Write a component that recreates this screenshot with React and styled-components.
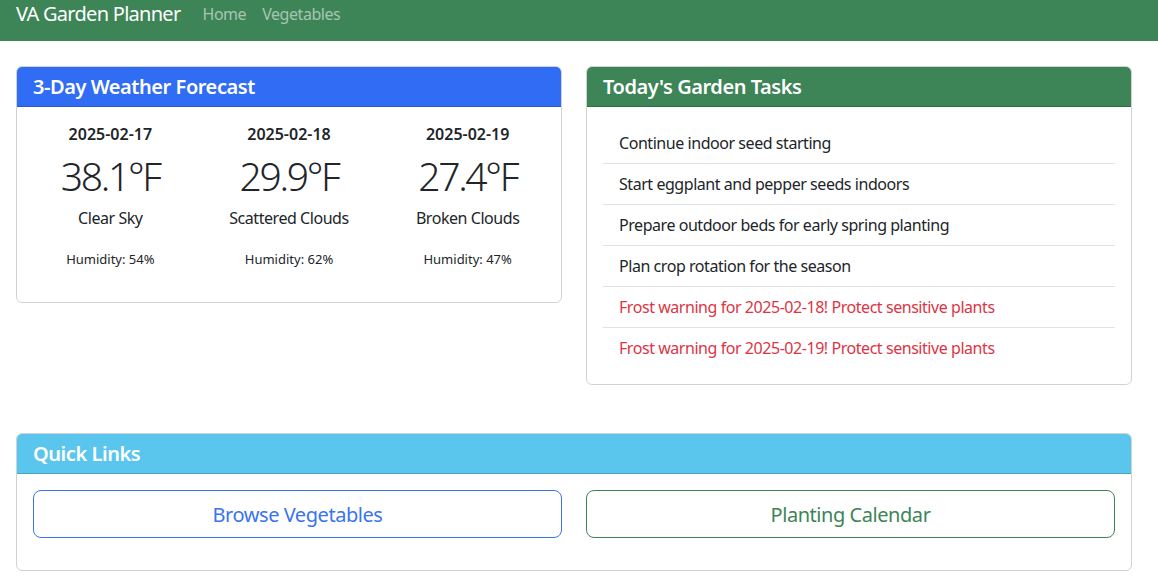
import styled, { createGlobalStyle } from "styled-components";

const GlobalStyle = createGlobalStyle`
  * { box-sizing: border-box; }
  body {
    margin: 0;
    font-family: "Noto Sans", "Open Sans", sans-serif;
    letter-spacing: -0.028em;
    color: #212529;
    background: #fff;
  }
`;

const Navbar = styled.nav`
  height: 41px;
  background: #3d8457;
  display: flex;
  align-items: flex-start;
  padding: 0 16px;
`;
const Brand = styled.a`
  color: #fff;
  font-size: 20px;
  line-height: 28px;
  letter-spacing: -0.036em;
  margin-right: 22px;
  text-decoration: none;
`;
const NavLinks = styled.div`
  display: flex;
  gap: 16px;
`;
const NavLink = styled.a`
  color: rgba(255, 255, 255, 0.55);
  font-size: 16px;
  line-height: 28px;
  text-decoration: none;
`;

const Page = styled.main`
  width: 1142px;
  padding: 25px 10px 0 16px;
`;
const Row = styled.div`
  display: grid;
  grid-template-columns: 1fr 1fr;
  gap: 24px;
  align-items: start;
  margin-bottom: ${(p) => p.$mb || 0}px;
`;
const Card = styled.section`
  border: 1px solid rgba(0, 0, 0, 0.175);
  border-radius: 6px;
  overflow: hidden;
`;
const CardHeader = styled.header`
  background: ${(p) => p.$bg};
  color: #fff;
  height: 40px;
  padding: 0 16px;
  display: flex;
  align-items: center;
  font-size: 20px;
  font-weight: 600;
  border-bottom: 1px solid rgba(0, 0, 0, 0.175);
`;
const CardBody = styled.div`
  padding: 16px;
`;

const WeatherRow = styled.div`
  display: grid;
  grid-template-columns: repeat(3, 1fr);
  margin: 0 -12px;
  padding-bottom: 17px;
`;
const Day = styled.div`
  text-align: center;
  padding: 0 12px;
`;
const DayDate = styled.div`
  font-weight: 600;
  font-size: 16px;
  line-height: 22px;
  letter-spacing: 0;
`;
const Temp = styled.div`
  font-size: 39px;
  font-weight: 300;
  line-height: 48px;
  letter-spacing: -2.3px;
  margin-top: 7px;
`;
const Desc = styled.div`
  font-size: 16px;
  line-height: 24px;
  margin-top: 6px;
`;
const Humidity = styled.div`
  font-size: 13px;
  line-height: 20px;
  letter-spacing: 0;
  margin-top: 19px;
`;

const TaskList = styled.ul`
  list-style: none;
  margin: 0;
  padding: 0;
`;
const Task = styled.li`
  padding: 0 16px;
  height: 41px;
  display: flex;
  align-items: center;
  font-size: 16px;
  color: ${(p) => (p.$warn ? "#dc3545" : "#212529")};
  border-bottom: 1px solid #dee2e6;
  &:last-child { border-bottom: none; height: 40px; }
`;

const LinksRow = styled.div`
  display: grid;
  grid-template-columns: 1fr 1fr;
  gap: 24px;
  padding-bottom: 16px;
`;
const LinkButton = styled.a`
  height: 48px;
  display: flex;
  align-items: center;
  justify-content: center;
  border: 1px solid ${(p) => p.$color};
  color: ${(p) => p.$color};
  border-radius: 8px;
  font-size: 20px;
  text-decoration: none;
`;

const days = [
  { date: "2025-02-17", temp: "38.1°F", desc: "Clear Sky", hum: 54 },
  { date: "2025-02-18", temp: "29.9°F", desc: "Scattered Clouds", hum: 62 },
  { date: "2025-02-19", temp: "27.4°F", desc: "Broken Clouds", hum: 47 },
];

const tasks = [
  { text: "Continue indoor seed starting" },
  { text: "Start eggplant and pepper seeds indoors" },
  { text: "Prepare outdoor beds for early spring planting" },
  { text: "Plan crop rotation for the season" },
  { text: "Frost warning for 2025-02-18! Protect sensitive plants", warn: true },
  { text: "Frost warning for 2025-02-19! Protect sensitive plants", warn: true },
];

export default function App() {
  return (
    <>
      <GlobalStyle />
      <Navbar>
        <Brand href="#">VA Garden Planner</Brand>
        <NavLinks>
          <NavLink href="#">Home</NavLink>
          <NavLink href="#">Vegetables</NavLink>
        </NavLinks>
      </Navbar>
      <Page>
        <Row $mb={48}>
          <Card>
            <CardHeader $bg="#316cf4">3-Day Weather Forecast</CardHeader>
            <CardBody>
              <WeatherRow>
                {days.map((d) => (
                  <Day key={d.date}>
                    <DayDate>{d.date}</DayDate>
                    <Temp>{d.temp}</Temp>
                    <Desc>{d.desc}</Desc>
                    <Humidity>Humidity: {d.hum}%</Humidity>
                  </Day>
                ))}
              </WeatherRow>
            </CardBody>
          </Card>
          <Card>
            <CardHeader $bg="#3d8457">Today's Garden Tasks</CardHeader>
            <CardBody>
              <TaskList>
                {tasks.map((t) => (
                  <Task key={t.text} $warn={t.warn}>{t.text}</Task>
                ))}
              </TaskList>
            </CardBody>
          </Card>
        </Row>
        <Card>
          <CardHeader $bg="#5bc6ed">Quick Links</CardHeader>
          <CardBody>
            <LinksRow>
              <LinkButton href="#" $color="#3a74ef">Browse Vegetables</LinkButton>
              <LinkButton href="#" $color="#3d8457">Planting Calendar</LinkButton>
            </LinksRow>
          </CardBody>
        </Card>
      </Page>
    </>
  );
}
